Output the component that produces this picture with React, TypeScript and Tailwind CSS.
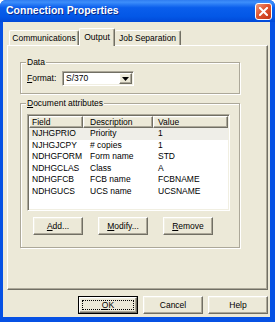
import type { ReactNode } from 'react';

const ROWS = [
  ['NJHGPRIO', 'Priority', '1'],
  ['NJHGJCPY', '# copies', '1'],
  ['NDHGFORM', 'Form name', 'STD'],
  ['NDHGCLAS', 'Class', 'A'],
  ['NDHGFCB', 'FCB name', 'FCBNAME'],
  ['NDHGUCS', 'UCS name', 'UCSNAME'],
];

const raised =
  'border border-t-white border-l-white border-r-[#716F64] border-b-[#716F64] shadow-[inset_-1px_-1px_0_#ACA899,inset_1px_1px_0_#F1EFE2]';
const sunken =
  'border border-t-[#ACA899] border-l-[#ACA899] border-r-white border-b-white shadow-[inset_1px_1px_0_#716F64,inset_-1px_-1px_0_#F1EFE2]';

function Button({ children, className = '' }: { children: ReactNode; className?: string }) {
  return (
    <div className={`flex h-[18px] w-[50px] items-center justify-center bg-[#ECE9D8] ${raised} ${className}`}>
      {children}
    </div>
  );
}

function Group({ label, className, children }: { label: ReactNode; className: string; children?: ReactNode }) {
  return (
    <div className={`relative border border-[#ACA899] shadow-[1px_1px_0_white,inset_1px_1px_0_white] ${className}`}>
      <span className="absolute -top-[6px] left-[5px] bg-[#ECE9D8] px-[1px] leading-[11px]">{label}</span>
      {children}
    </div>
  );
}

export default function App() {
  return (
    <div className="flex h-[322px] w-[275px] flex-col rounded-t-[6px] bg-[#0651E4] font-['Liberation_Sans',Arial,sans-serif] text-[8.5px] text-black">
      {/* title bar */}
      <div className="flex h-[22px] shrink-0 items-center rounded-t-[6px] bg-[linear-gradient(to_bottom,#2F7CF0_0%,#3D8EFA_10%,#0A5EEC_35%,#0357E6_75%,#0149D8_100%)] pl-[6px] pr-[3px]">
        <span className="flex-1 text-[10.5px] font-bold text-white [text-shadow:1px_1px_0_#0A2C8C]">Connection Properties</span>
        <div className="flex h-[17px] w-[17px] items-center justify-center rounded-[3px] border border-white bg-[linear-gradient(135deg,#EE9A80_0%,#E0542F_45%,#C23515_100%)]">
          <svg width="9" height="9" viewBox="0 0 9 9">
            <path d="M1 1 L8 8 M8 1 L1 8" stroke="white" strokeWidth="2" strokeLinecap="square" />
          </svg>
        </div>
      </div>

      {/* client */}
      <div className="mb-[5px] ml-[3px] mr-[5px] flex flex-1 flex-col bg-[#ECE9D8] pl-[4px] pr-[2px]">
        {/* tabs */}
        <div className="mt-[6px] flex h-[17px] items-end pl-[2px]">
          <div className="flex h-[15px] w-[70px] items-center justify-center rounded-t-[2px] border-l border-t border-r border-l-white border-t-white border-r-[#716F64] shadow-[inset_-1px_0_0_#ACA899]">
            Communications
          </div>
          <div className="relative z-10 -mb-[1px] flex h-[18px] w-[36px] items-start justify-center rounded-t-[2px] border-l border-t border-r border-l-white border-t-white border-r-[#716F64] bg-[#ECE9D8] pt-[2px] shadow-[inset_-1px_0_0_#ACA899]">
            Output
          </div>
          <div className="flex h-[15px] w-[66px] items-center justify-center rounded-t-[2px] border-t border-r border-t-white border-r-[#716F64] shadow-[inset_-1px_0_0_#ACA899]">
            Job Separation
          </div>
        </div>

        {/* panel */}
        <div className="flex h-[245px] flex-col border border-t-white border-l-white border-r-[#716F64] border-b-[#716F64] pl-[12px] shadow-[inset_-1px_-1px_0_#ACA899]">
          <Group label="Data" className="mt-[16px] h-[32px] w-[220px]">
            <div className="flex items-center pl-[6px] pt-[8px]">
              <span className="w-[35px]">
                <span className="underline">F</span>ormat:
              </span>
              <div className={`flex h-[15px] w-[72px] bg-white p-[1px] ${sunken}`}>
                <span className="flex-1 pl-[2px] leading-[11px]">S/370</span>
                <div className={`flex h-[11px] w-[13px] items-center justify-center bg-[#ECE9D8] ${raised}`}>
                  <svg width="7" height="4" viewBox="0 0 7 4">
                    <path d="M0 0 H7 L3.5 4 Z" fill="black" />
                  </svg>
                </div>
              </div>
            </div>
          </Group>

          <Group
            label={
              <>
                <span className="underline">D</span>ocument attributes
              </>
            }
            className="mt-[9px] h-[145px] w-[220px]"
          >
            <div className="pl-[6px] pt-[10px]">
              <div className={`h-[97px] w-[203px] bg-white p-[1px] ${sunken}`}>
                <div className="flex h-[12px]">
                  <div className={`w-[54px] bg-[#ECE9D8] pl-[2px] leading-[10px] ${raised}`}>Field</div>
                  <div className={`w-[70px] bg-[#ECE9D8] pl-[6px] leading-[10px] ${raised}`}>Description</div>
                  <div className={`flex-1 bg-[#ECE9D8] pl-[4px] leading-[10px] ${raised}`}>Value</div>
                </div>
                {ROWS.map((r, i) => (
                  <div key={r[0]} className={`flex h-[11.6px] leading-[11.6px] ${i === 0 ? 'bg-[#EFEEE8]' : ''}`}>
                    <span className="w-[54px] pl-[3px]">{r[0]}</span>
                    <span className="w-[70px] pl-[7px]">{r[1]}</span>
                    <span className="flex-1 pl-[5px]">{r[2]}</span>
                  </div>
                ))}
              </div>
              <div className="mt-[6px] flex gap-[15px] pl-[6px]">
                <Button>
                  <span>
                    <span className="underline">A</span>dd...
                  </span>
                </Button>
                <Button>
                  <span>
                    <span className="underline">M</span>odify...
                  </span>
                </Button>
                <Button>
                  <span>
                    <span className="underline">R</span>emove
                  </span>
                </Button>
              </div>
            </div>
          </Group>
        </div>

        {/* dialog buttons */}
        <div className="mt-[6px] flex justify-end gap-[5px]">
          <div className="h-[18px] w-[60px] border border-black">
            <div className={`flex h-full w-full items-center justify-center bg-[#ECE9D8] p-[2px] ${raised}`}>
              <div className="flex h-full w-full items-center justify-center border border-dotted border-black">
                <span>
                  <span className="underline">O</span>K
                </span>
              </div>
            </div>
          </div>
          <Button className="w-[60px]">Cancel</Button>
          <Button className="w-[60px]">Help</Button>
        </div>
      </div>
    </div>
  );
}
